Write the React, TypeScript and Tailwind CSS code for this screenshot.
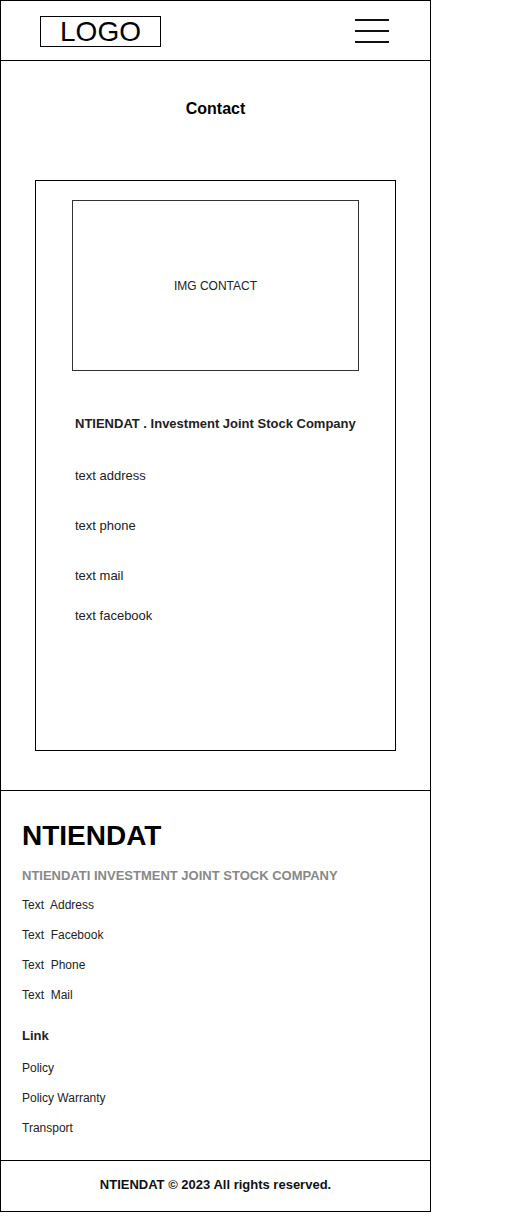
import React from "react";

const font = { fontFamily: '"Liberation Sans", Arial, sans-serif' };

export default function App() {
  return (
    <div className="bg-white min-h-[1219px] w-[524px]" style={font}>
      <div className="w-[431px] border-x border-b border-t border-black">
        {/* Header */}
        <div className="h-[60px] border-b border-black flex items-start justify-between">
          <div className="ml-[39px] mt-[15px] w-[121px] h-[31px] border border-black flex items-center justify-center text-[28px] leading-none text-black">
            LOGO
          </div>
          <div className="mr-[41px] mt-[18px] w-[34px] flex flex-col gap-[9px]">
            <div className="h-[2px] bg-[#111]" />
            <div className="h-[2px] bg-[#111]" />
            <div className="h-[2px] bg-[#111]" />
          </div>
        </div>

        {/* Main */}
        <div className="border-b border-black pb-[39px]">
          <div className="mt-[38px] h-[20px] leading-[20px] text-center text-[16px] font-bold text-black">
            Contact
          </div>
          <div className="mt-[61px] ml-[34px] w-[361px] h-[571px] border border-black pl-[36px] pt-[19px]">
            <div className="w-[287px] h-[171px] border border-[#333] flex items-center justify-center text-[12px] text-[#222]">
              IMG CONTACT
            </div>
            <div className="pl-[3px] text-[#222]">
              <div className="mt-[43px] h-[20px] leading-[20px] text-[13px] font-bold">
                NTIENDAT . Investment Joint Stock Company
              </div>
              <div className="mt-[32px] h-[20px] leading-[20px] text-[13px]">text address</div>
              <div className="mt-[30px] h-[20px] leading-[20px] text-[13px]">text phone</div>
              <div className="mt-[30px] h-[20px] leading-[20px] text-[13px]">text mail</div>
              <div className="mt-[20px] h-[20px] leading-[20px] text-[13px]">text facebook</div>
            </div>
          </div>
        </div>

        {/* Footer */}
        <div className="border-b border-black pl-[21px] pt-[29px] pb-[22px]">
          <div className="h-[32px] leading-[32px] text-[28px] font-bold text-black">NTIENDAT</div>
          <div className="mt-[14px] h-[20px] leading-[20px] text-[13px] font-bold text-[#888]">
            NTIENDATI INVESTMENT JOINT STOCK COMPANY
          </div>
          <div className="text-[12px] text-[#222] whitespace-pre">
            <div className="mt-[9px] h-[20px] leading-[20px]">Text  Address</div>
            <div className="mt-[10px] h-[20px] leading-[20px]">Text  Facebook</div>
            <div className="mt-[10px] h-[20px] leading-[20px]">Text  Phone</div>
            <div className="mt-[10px] h-[20px] leading-[20px]">Text  Mail</div>
          </div>
          <div className="mt-[21px] h-[20px] leading-[20px] text-[13px] font-bold text-[#222]">Link</div>
          <div className="text-[12px] text-[#222]">
            <div className="mt-[12px] h-[20px] leading-[20px]">Policy</div>
            <div className="mt-[10px] h-[20px] leading-[20px]">Policy Warranty</div>
            <div className="mt-[10px] h-[20px] leading-[20px]">Transport</div>
          </div>
        </div>

        <div className="pt-[14px] pb-[15px] h-[50px] leading-[20px] text-center text-[13px] font-bold text-[#111]">
          NTIENDAT © 2023 All rights reserved.
        </div>
      </div>
    </div>
  );
}
